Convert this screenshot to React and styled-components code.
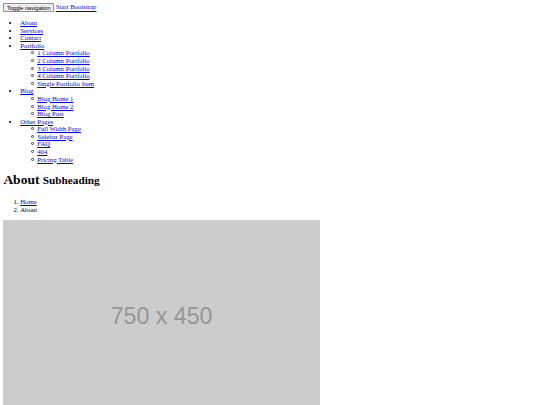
import React from 'react'
import styled, { createGlobalStyle } from 'styled-components'

// the reference is a 1280px wide page shrunk into 540px
const s = n => `${n * 0.421875}px`

const GlobalStyle = createGlobalStyle`
html, body {
    margin: 0;
    background: #fff;
}
body {
    font-family: "Liberation Serif", "Times New Roman", serif;
    font-size: ${s(16)};
    line-height: ${s(18)};
    color: #000;
}
a {
    color: #0000ee;
}
`

const portfolio = ['1 Column Portfolio', '2 Column Portfolio', '3 Column Portfolio', '4 Column Portfolio', 'Single Portfolio Item']
const blog = ['Blog Home 1', 'Blog Home 2', 'Blog Post']
const pages = ['Full Width Page', 'Sidebar Page', 'FAQ', '404', 'Pricing Table']

function App() {
    return (
        <Page>
            <GlobalStyle />
            <Nav>
                <ToggleButton type="button">Toggle navigation</ToggleButton> <a href="#">Start Bootstrap</a>
                <NavList>
                    <li><a href="#">About</a></li>
                    <li><a href="#">Services</a></li>
                    <li><a href="#">Contact</a></li>
                    <li>
                        <a href="#">Portfolio</a>
                        <SubList>
                            {portfolio.map(item => <li key={item}><a href="#">{item}</a></li>)}
                        </SubList>
                    </li>
                    <li>
                        <a href="#">Blog</a>
                        <SubList>
                            {blog.map(item => <li key={item}><a href="#">{item}</a></li>)}
                        </SubList>
                    </li>
                    <li>
                        <a href="#">Other Pages</a>
                        <SubList>
                            {pages.map(item => <li key={item}><a href="#">{item}</a></li>)}
                        </SubList>
                    </li>
                </NavList>
            </Nav>

            <Heading>About <small>Subheading</small></Heading>
            <Breadcrumb>
                <li><a href="#">Home</a></li>
                <li>About</li>
            </Breadcrumb>

            <Placeholder>750 x 450</Placeholder>
        </Page>
    )
}

export default App

const Page = styled.div`
padding: ${s(8)};
`

const Nav = styled.nav`
display: block;
`

const ToggleButton = styled.button`
font-family: "Liberation Sans", Arial, sans-serif;
font-size: ${s(13.333)};
line-height: normal;
padding: ${s(1)} ${s(6)};
background: #efefef;
border: 1px solid #8f8f8f;
border-radius: 1px;
color: #000;
`

const NavList = styled.ul`
margin: ${s(16)} 0;
padding-left: ${s(40)};
list-style: disc;
`

// hollow ring markers: the built-in circle fills in at this size
const SubList = styled.ul`
margin: 0;
padding-left: ${s(40)};
list-style: none;
li::before {
    content: "";
    display: inline-block;
    box-sizing: border-box;
    width: 3px;
    height: 3px;
    margin-left: -6.5px;
    margin-right: 3.5px;
    border: 1px solid #333;
    border-radius: 50%;
    vertical-align: 0.15em;
}
`

const Heading = styled.h1`
font-size: ${s(32)};
line-height: ${s(37)};
font-weight: bold;
margin: ${s(21.44)} 0;
small {
    font-size: smaller;
}
`

const Breadcrumb = styled.ol`
margin: ${s(16)} 0;
padding-left: ${s(40)};
`

const Placeholder = styled.div`
width: ${s(750)};
height: ${s(450)};
background: #cccccc;
color: #969696;
display: flex;
align-items: center;
justify-content: center;
font-family: "Liberation Sans", Arial, sans-serif;
font-size: ${s(55)};
line-height: normal;
padding-top: ${s(8)};
box-sizing: border-box;
`
